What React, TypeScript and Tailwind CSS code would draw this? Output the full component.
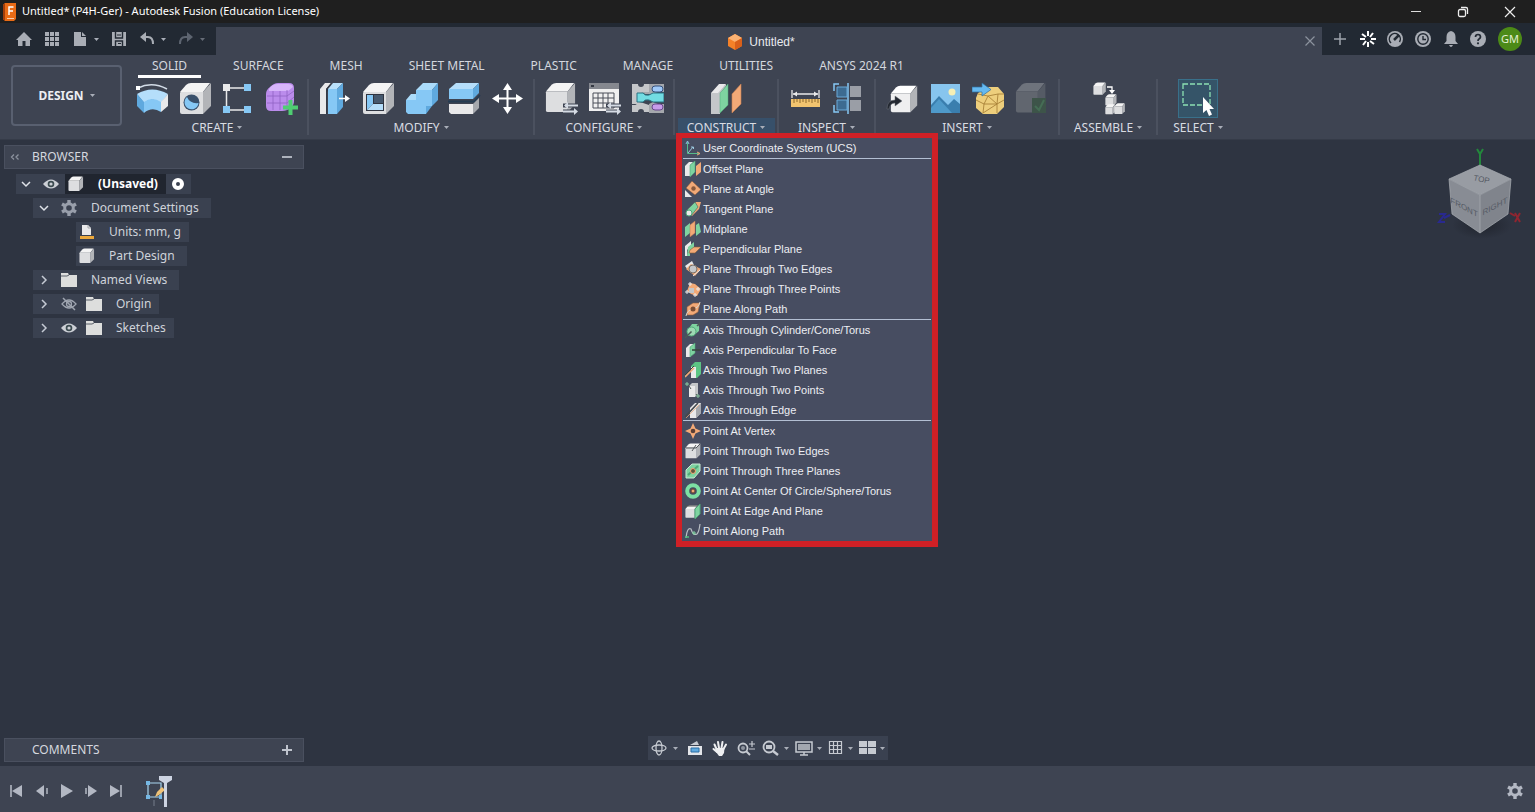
import React from "react";

type Kids = { children: React.ReactNode };

const W = "#e9e9ea";
const G = "#c4c6c9";
const D = "#a5a8ad";
const B = "#86c8f5";
const B2 = "#5fa9de";
const GR = "#7ed3a0";
const GR2 = "#4fa878";
const OR = "#f2a977";

function I33({ children }: Kids) {
  return (
    <svg viewBox="0 0 33 33" className="size-[33px] shrink-0" fill="none" aria-hidden="true">
      {children}
    </svg>
  );
}

function I16({ children }: Kids) {
  return (
    <svg viewBox="0 0 16 16" className="size-4 shrink-0" fill="none" aria-hidden="true">
      {children}
    </svg>
  );
}

function Solid({ x = 0, y = 0, s = 1, top = "#f4f4f4", front = "#dddee0", side = "#b2b4b8" }) {
  return (
    <g transform={`translate(${x} ${y}) scale(${s})`}>
      <path d="M1 10 L7 3 Q9 1 12 1 H31 L24 10Z" fill={top} />
      <path d="M24 10 L32 1 V24 L24 32Z" fill={side} />
      <path d="M1 11 Q1 10 2 10 H24 V32 H3 Q1 32 1 30Z" fill={front} />
    </g>
  );
}

function Arrows() {
  return (
    <g>
      <path d="M18 23.500H33M18 29.500H33" stroke="#3e4452" strokeWidth="4" />
      <path d="M20 23.500H33M18 29.500H30" stroke="#d5dbe4" strokeWidth="1.800" />
      <path d="M23 20 19 23.500 23 27ZM29 26 33 29.500 29 33Z" fill="#d5dbe4" />
    </g>
  );
}

const createIcons: [string, React.ReactNode][] = [
  ["Extrude sketch", <I33 key="a"><path d="M2 6Q16-1 31 7" stroke="#d3dce7" strokeWidth="1.500" /><rect x="0" y="4" width="4" height="4" fill="#fff" /><path d="M1 12Q16 3 32 12L25 21Q16 14 8 21Z" fill="#b5defa" /><path d="M1 12 8 20V31L1 24Z" fill={B2} /><path d="M8 20Q16 14 25 20V30Q16 24 8 31Z" fill={B} /><path d="M25 20 32 12V24L25 30Z" fill={W} /></I33>],
  ["Hole", <I33 key="a"><Solid /><circle cx="12.500" cy="20.500" r="8" fill="#39506b" /><path d="M8 15A7 7 0 1 0 19.500 21Q11 22 8 15Z" fill={B} /></I33>],
  ["Create sketch", <I33 key="a"><path d="M7 6H26M4.500 9V25M7 28H26" stroke={W} strokeWidth="1.500" /><rect x="1" y="2" width="7" height="7" fill={W} /><rect x="22" y="2" width="7" height="7" fill={B} /><rect x="1" y="24" width="7" height="7" fill={B} /><rect x="22" y="24" width="7" height="7" fill={B} /></I33>],
  ["Create form", <I33 key="a"><path d="M1 12Q1 8 5 5 9 1 13 1H24Q29 1 29 6V19Q29 24 25 26 22 29 17 29H6Q1 29 1 24Z" fill="#bb8cec" /><path d="M4 7Q7 2 13 2H23Q27 2 28 5L23 9H4Z" fill="#d7b5fa" /><path d="M2 14H22M2 21H22M8 9V28M15 9V28M22 8V28M22 14 29 9M22 21 29 15" stroke="#8f63c4" strokeWidth=".8" /><path d="M18 25.500H33M25.500 18V33" stroke="#4fce72" strokeWidth="4" /></I33>],
];

const modifyIcons: [string, React.ReactNode][] = [
  ["Press pull", <I33 key="a"><path d="M1 7 6 1H12L7 7V32H1Z" fill={W} /><path d="M7 7 12 1V5L8 10V32H7Z" fill="#353a45" /><path d="M9 7 14 1H24L18 7Z" fill="#b9e1fb" /><path d="M9 7H18V32H9Z" fill={B} /><path d="M18 7 24 1V25L18 32Z" fill={B2} /><path d="M20 16.500H28" stroke="#fff" strokeWidth="1.500" /><path d="M26 13 31 16.500 26 20Z" fill="#fff" /></I33>],
  ["Shell", <I33 key="a"><Solid /><path d="M4 12H22V29H4Z" fill="#303541" /><path d="M12 13H21V21H12Z" fill="#46596e" /><path d="M5 13H11V22L5 28Z" fill={B} /><path d="M5 28 11 22H21V28Z" fill="#b5defa" /></I33>],
  ["Combine", <I33 key="a"><path d="M11 8 18 1H33L27 8ZM1 18 6 12H11V18Z" fill="#abdcfb" /><path d="M11 8H27V24H21V32H3L1 30V18H11Z" fill={B} /><path d="M27 8 33 1V18L27 24ZM21 24H27L21 32Z" fill={B2} /></I33>],
  ["Split body", <I33 key="a"><path d="M1 7 8 1H31L25 7Z" fill="#b5defa" /><path d="M1 7H25V17H1Z" fill={B} /><path d="M25 7 31 1V11L25 17Z" fill={B2} /><path d="M0 19.500H26L32 13" stroke="#253c53" strokeWidth="1.800" /><path d="M1 22H25V32H3L1 30Z" fill={W} /><path d="M25 22 31 16V26L25 32Z" fill={D} /></I33>],
  ["Move", <I33 key="a"><path d="M16.500 5V28M5 16.500H28" stroke="#fff" strokeWidth="2" /><path d="M12 8 16.500 1 21 8ZM12 25 16.500 32 21 25ZM8 12 1 16.500 8 21ZM25 12 32 16.500 25 21Z" fill="#fff" /></I33>],
];

const configureIcons: [string, React.ReactNode][] = [
  ["Configure design", <I33 key="a"><Solid s={0.94} /><Arrows /></I33>],
  ["Configuration table", <I33 key="a"><path d="M1 1H31V29H1Z" fill="#f0f0f0" /><path d="M1 1H31V7H1Z" fill="#85888f" /><path d="M3 4H6" stroke="#343943" strokeWidth="2" /><path d="M5 11H26V26H5ZM5 16H26M5 21H26M10 11V26M15 11V26M20 11V26" stroke="#4b4f58" strokeWidth="1" /><Arrows /></I33>],
  ["Component group", <I33 key="a"><path d="M1 2H7Q7 5 10 5 13 5 13 2H18V10L12 11 8 13V20L12 21 18 23V30H13Q13 27 10 27 7 27 7 30H1V23H4Q6 23 6 20H1Z" fill={G} /><path d="M1 8H8V22H1Z" fill={G} /><path d="M18 2H33V10H27L22 12H14L10 10H18ZM18 22 22 20 27 22H33V31H18Z" fill={D} /><rect x="21" y="4" width="11" height="6" rx="3" fill="#9fc9f8" stroke="#35517d" /><path d="M6 11H12Q14 14 18 13L22 11H33V20H22L18 18Q14 17 12 20H6Z" fill="#72dce2" stroke="#2a7383" /><rect x="21" y="22" width="11" height="6" rx="3" fill="#c79cea" stroke="#68478c" /></I33>],
];

const constructIcons: [string, React.ReactNode][] = [
  ["Offset plane", <I33 key="a"><path d="M1 11 9 2H16L10 10V32H1Z" fill={W} /><path d="M1 11H8L16 2V4L10 12V32H1Z" fill={G} /><path d="M10 11 18 2V23L10 31Z" fill={GR} stroke={GR2} strokeWidth=".5" /><path d="M22 12 31 2V22L22 31Z" fill={OR} stroke="#ca8053" strokeWidth=".6" /></I33>],
];

const inspectIcons: [string, React.ReactNode][] = [
  ["Measure", <I33 key="a"><path d="M3 8V16M30 8V16M4 12H29" stroke={W} strokeWidth="1.300" /><path d="M4 12 8 9.500V14.500ZM29 12 25 9.500V14.500Z" fill={W} /><path d="M2 17H31V25H2Z" fill="#f2c46f" /><path d="M5 17V21M8 17V20M11 17V21M14 17V20M17 17V21M20 17V20M23 17V21M26 17V20M29 17V21" stroke="#8c692d" /></I33>],
  ["Interference", <I33 key="a"><path d="M7 2H2V9M2 23V30H7M16 1V32" stroke={B} strokeWidth="1.500" /><path d="M5 5H15V15H5ZM5 18H15V28H5Z" fill="#3d6b91" stroke="#6baad8" /><path d="M18 4H29V15H18ZM18 18H29V29H18Z" fill="#9a9ea6" /></I33>],
];

const insertIcons: [string, React.ReactNode][] = [
  ["Insert derive", <I33 key="a"><Solid x={4} y={3} s={0.85} top="#ffffff" front="#efeff0" /><path d="M1 27Q1 18 9 18V14L16 19 9 24V21Q4 21 3 27Z" fill="#232831" stroke="#6d727b" strokeWidth=".5" /></I33>],
  ["Canvas", <I33 key="a"><path d="M2 2H31V31H2Z" fill="#87c5ee" /><circle cx="23" cy="10" r="3.500" fill="#f7efb5" /><path d="M2 23 10 14 19 23 25 17 31 22V31H2Z" fill="#3a7eae" /><path d="M2 26 10 17 23 31H2Z" fill="#4f9aca" /></I33>],
  ["Insert mesh", <I33 key="a"><path d="M6 11 15 5H26L32 12V25L25 32H11L4 26V16Z" fill="#edce7c" /><path d="M6 12 16 14 26 12 32 12M16 14 12 22 4 18M12 22 25 22 26 12M12 22 11 31 25 22 32 18M25 22V31M16 14 25 22" stroke="#a98239" strokeWidth=".9" /><path d="M0 5H10V1L19 7.500 10 14V10H0Z" fill="#65b9f0" stroke="#2f6e9d" strokeWidth=".7" /></I33>],
  ["Manufacturer part", <I33 key="a"><Solid s={0.95} top="#6e737c" front="#61666f" side="#555b65" /><path d="M17 16H31V31H17Z" fill="#3d5449" /><path d="M20 24 24 28 29 18" stroke="#456d55" strokeWidth="2" /></I33>],
];

const assembleIcons: [string, React.ReactNode][] = [
  ["New component", <I33 key="a"><Solid x={1} s={0.4} y={0} /><Solid x={13} y={12} s={0.36} /><Solid x={13} y={22} s={0.32} /><Solid x={22} y={21} s={0.34} /><path d="M15 5H20V9" stroke="#fff" strokeWidth="1.300" /><path d="M17 8H23L20 12Z" fill="#fff" /></I33>],
];

const groups = [
  { name: "CREATE", icons: createIcons, cls: "w-[182px]" },
  { name: "MODIFY", icons: modifyIcons, cls: "w-[226px]" },
  { name: "CONFIGURE", icons: configureIcons, cls: "w-[140px]" },
  { name: "CONSTRUCT", icons: constructIcons, cls: "w-[104px]" },
  { name: "INSPECT", icons: inspectIcons, cls: "w-[97px]" },
  { name: "INSERT", icons: insertIcons, cls: "w-[184px]" },
  { name: "ASSEMBLE", icons: assembleIcons, cls: "w-[98px]" },
];

const tabs = ["SOLID", "SURFACE", "MESH", "SHEET METAL", "PLASTIC", "MANAGE", "UTILITIES", "ANSYS 2024 R1"];

const DK = "#4c5a55";
const face = <path d="M1 6 5 2H9L6 5V15H1Z" fill={W} />;

const menu: [string, React.ReactNode][][] = [
  [["User Coordinate System (UCS)", <I16 key="i"><path d="M2.500 2V13.500H14" stroke="#57b98a" /><path d="M1 4 2.500 1 4 4" stroke="#8cbde0" /><path d="M3 13 8 7M6 7H8.500V9" stroke="#9bc7de" /><path d="M12 12 15 13.500 12 15" stroke={OR} /></I16>]],
  [
    ["Offset Plane", <I16 key="i"><path d="M0 5 4 1H8L5 5V15H0Z" fill={W} /><path d="M5 4 10 0V11L5 16Z" fill={GR} stroke={GR2} strokeWidth=".6" /><path d="M11 5 16 1V11L11 15Z" fill={OR} /></I16>],
    ["Plane at Angle", <I16 key="i"><path d="M7 0 16 8.500 10 14 1 7Z" fill={OR} stroke="#7c533b" strokeWidth=".5" /><circle cx="8.500" cy="7.500" r="2.200" fill="#8a5a3d" /><path d="M0 9 7 16H0Z" fill={W} /></I16>],
    ["Tangent Plane", <I16 key="i"><path d="M3 8 11 1H16L14 8 7 15Z" fill={OR} /><path d="M2 9 10 1 13 6 6 15Z" fill={GR} stroke={DK} strokeWidth=".6" /><circle cx="4" cy="12" r="3" fill={W} stroke={GR2} /></I16>],
    ["Midplane", <I16 key="i"><path d="M0 6 5 2V12L0 16Z" fill={GR} /><path d="M5 4 10 0V12L5 16Z" fill={OR} stroke="#b87550" strokeWidth=".5" /><path d="M11 4 14 2 16 11 11 15Z" fill={GR} /></I16>],
    ["Perpendicular Plane", <I16 key="i"><path d="M0 5 6 0V5L2 9V15H0Z" fill={W} /><path d="M3 6 9 1V8L5 11V15H2Z" fill={GR} /><path d="M5 9 9 6H16L10 12H4Z" fill={OR} stroke="#875f35" strokeWidth=".6" /></I16>],
    ["Plane Through Two Edges", <I16 key="i"><path d="M0 5 7 0 9 4 3 9Z" fill={W} /><path d="M6 3 16 8 10 15 1 8Z" fill={OR} /><circle cx="8" cy="8" r="4" fill={G} stroke="#796d63" /><path d="M8 15 15 9" stroke={W} /></I16>],
    ["Plane Through Three Points", <I16 key="i"><path d="M2 10 5 2 10 3 16 8 12 15 6 13Z" fill={OR} /><path d="M4 7H9V12H4Z" fill={G} /><path d="M5 1V5M3 3H7M13 6V10M11 8H15M10 12V16M8 14H12M2 9V13M0 11H4" stroke={W} /></I16>],
    ["Plane Along Path", <I16 key="i"><path d="M2 6 8 2 15 2 13 11 8 14 2 14Z" fill={OR} stroke="#92603f" strokeWidth=".6" /><path d="M1 15Q2 9 8 8 14 7 15 1" stroke="#d8d7d1" /><circle cx="8" cy="8" r="2.500" fill="#7a4e35" /></I16>],
  ],
  [
    ["Axis Through Cylinder/Cone/Torus", <I16 key="i"><path d="M2 9 7 2H13Q15 5 14 9L8 14H3Z" fill={GR} /><ellipse cx="6.500" cy="9.500" rx="4.500" ry="4.500" fill="#9dd9b4" stroke={GR2} /><path d="M0 16 6.500 9.500M12 4 15 1" stroke={DK} strokeWidth="1.500" /></I16>],
    ["Axis Perpendicular To Face", <I16 key="i">{face}<path d="M5 5 10 1V11L5 15Z" fill={GR} stroke={GR2} strokeWidth=".6" /><path d="M7 8H16" stroke="#39463f" strokeWidth="1.600" /></I16>],
    ["Axis Through Two Planes", <I16 key="i"><path d="M6 4 10 0H16V12L12 16H6Z" fill="#5cc584" /><path d="M6 5H11V16H6Z" fill={W} /><path d="M0 15 9 6" stroke={OR} strokeWidth="1.600" /><path d="M0 13 9 4" stroke="#39463f" /></I16>],
    ["Axis Through Two Points", <I16 key="i"><path d="M4 4 7 1H13V12L10 15H4Z" fill={G} /><path d="M4 4H10V15H4Z" fill={W} /><path d="M2 1 6 7M11 12 13 15" stroke={DK} /><path d="M0 2H4M2 0V4M11 14H15M13 12V16" stroke="#8ac8a2" /></I16>],
    ["Axis Through Edge", <I16 key="i"><path d="M5 6 10 1H16V11L11 16H5Z" fill={W} /><path d="M11 6 16 1V11L11 16Z" fill={D} /><path d="M0 15 13 1" stroke="#45494d" strokeWidth="1.600" /><path d="M1 16 14 3" stroke={OR} strokeWidth=".7" /></I16>],
  ],
  [
    ["Point At Vertex", <I16 key="i"><path d="M8 0 10.500 5.500 16 8 10.500 10.500 8 16 5.500 10.500 0 8 5.500 5.500Z" fill={OR} /><circle cx="8" cy="8" r="2.300" fill="#5a3f36" /></I16>],
    ["Point Through Two Edges", <I16 key="i"><Solid s={0.48} /><path d="M1 5H11L15 1M11 2 7 8" stroke="#54585d" /></I16>],
    ["Point Through Three Planes", <I16 key="i"><path d="M1 7 7 1H15V8L9 15H1Z" fill={GR} stroke="#c7e9d3" /><path d="M3 12 13 3" stroke={GR2} strokeWidth="2" /><circle cx="8" cy="8" r="2.500" fill="#5f573f" stroke={OR} /></I16>],
    ["Point At Center Of Circle/Sphere/Torus", <I16 key="i"><circle cx="8" cy="8" r="5.800" stroke="#7ce0a3" strokeWidth="4" /><circle cx="8" cy="8" r="2" fill={OR} stroke="#64462f" /></I16>],
    ["Point At Edge And Plane", <I16 key="i"><Solid s={0.4} y={2} /><path d="M10 6 15 1V11L10 16Z" fill={GR} stroke={GR2} /><path d="M0 3H12" stroke="#4f5350" /></I16>],
    ["Point Along Path", <I16 key="i"><path d="M1 15Q2 4 6 6 8 13 12 11 14 9 15 1" stroke="#b9bec4" strokeWidth="1.200" /><path d="M0 14H4" stroke="#4fbe7b" strokeWidth="1.500" /><path d="M7 10H11M9 8V12" stroke={GR} /></I16>],
  ],
];

function Caret({ dim = false }: { dim?: boolean }) {
  return (
    <svg viewBox="0 0 5 3" className="h-[3px] w-[5px] shrink-0" aria-hidden="true">
      <path d="M0 0H5L2.500 3Z" fill={dim ? "#666c77" : "#a9aeb8"} />
    </svg>
  );
}

function ConstructMenu() {
  return (
    <div role="menu" className="absolute top-[54px] left-px z-20 w-[262px] border-[6px] border-t-[5px] border-[#cf2026] bg-[#474d61] font-['Liberation_Sans',sans-serif] text-[11px] text-[#eceef3]">
      {menu.map((section, i) => (
        <div key={i} role="group" className={i ? "mx-px border-t border-[#b3bfd3]" : "mx-px"}>
          {section.map(([label, icon]) => (
            <button key={label} role="menuitem" className="flex h-5 w-full items-center gap-0.5 px-0.5 whitespace-nowrap">
              {icon}
              {label}
            </button>
          ))}
        </div>
      ))}
    </div>
  );
}

function Ribbon() {
  return (
    <section className="flex h-[85px] shrink-0 border-b border-[#353b48] bg-[#3e4452]">
      <button className="mt-[10px] ml-[11px] flex h-[61px] w-[111px] items-center justify-center gap-1.5 rounded border-2 border-[#596070] text-[12px] font-bold text-[#eceef2]">
        DESIGN <Caret />
      </button>
      <div className="ml-[5px] flex-1">
        <nav className="ml-[11px] flex h-[23px] gap-[18px] text-[12px] whitespace-nowrap text-[#d4d7de]">
          {tabs.map((t, i) => (
            <a key={t} href="#" className={i === 0 ? "border-b-[3px] border-white px-[14px] pt-[3px] leading-4" : "px-[14px] pt-[3px] leading-4"}>
              {t}
            </a>
          ))}
        </nav>
        <div className="flex pt-px">
          {groups.map((g) => {
            const on = g.name === "CONSTRUCT";
            return (
              <div key={g.name} className={`relative flex h-14 flex-col items-center border-r-2 border-[#4b515f] ${g.cls}`}>
                <div className="flex h-[39px] gap-[10px] pt-[3px]">
                  {g.icons.map(([label, icon]) => (
                    <button key={label} aria-label={label} className="h-[33px]">{icon}</button>
                  ))}
                </div>
                <button className={`flex h-[17px] items-center justify-center gap-1 pt-0.5 text-[12px] text-[#d9dce2] ${on ? "w-[97px] bg-[#37506a]" : ""}`}>
                  {g.name}
                  <Caret />
                </button>
                {on && <ConstructMenu />}
              </div>
            );
          })}
          <div className="flex h-14 w-20 flex-col items-center">
            <button aria-label="Select tool" className="flex h-[39px] w-10 items-center justify-center border border-[#39708a] bg-[#355468]">
              <svg viewBox="0 0 36 36" className="size-9" fill="none" aria-hidden="true">
                <path d="M3 3H30V24H3Z" stroke="#8ce0b2" strokeWidth="1.300" strokeDasharray="5 2" />
                <path d="M23 16V32L26.500 29 29 35 32 33.500 29.500 28H34Z" fill="#fff" />
              </svg>
            </button>
            <button className="flex h-[17px] items-center gap-1 pt-0.5 text-[12px] text-[#d9dce2]">
              SELECT <Caret />
            </button>
          </div>
        </div>
      </div>
    </section>
  );
}

function Q({ label, children }: { label: string; children: React.ReactNode }) {
  return (
    <button aria-label={label} className="flex items-center gap-1.5">
      {children}
    </button>
  );
}

function TopBars() {
  return (
    <>
      <header className="flex h-[23px] shrink-0 items-center bg-[#1f1f1f] pl-[2px]">
        <svg viewBox="0 0 16 18" className="h-[18px] w-4" aria-hidden="true">
          <path d="M3 0H14V16L12 18H3L1 16V2Z" fill="#e96b16" />
          <path d="M1 2 3 0V18L1 16Z" fill="#a43e0a" />
          <path d="M7 12V4H11.500M7 8H11" stroke="#fff" strokeWidth="1.500" fill="none" />
          <path d="M5 15.500H12" stroke="#fbd0b0" />
        </svg>
        <h1 className="ml-1 flex-1 text-[11px] text-white">Untitled* (P4H-Ger) - Autodesk Fusion (Education License)</h1>
        <div className="flex items-center gap-[35px] pr-[19px]">
          <button aria-label="Minimize"><svg viewBox="0 0 12 12" className="size-3" aria-hidden="true"><path d="M1 5.500H11" stroke="#ddd" /></svg></button>
          <button aria-label="Restore"><svg viewBox="0 0 12 12" className="size-3" fill="none" aria-hidden="true"><rect x="1.500" y="3.500" width="7" height="7" rx="1.500" stroke="#eee" strokeWidth="1.300" /><path d="M4 1.500H9Q10.500 1.500 10.500 3V8" stroke="#eee" strokeWidth="1.300" /></svg></button>
          <button aria-label="Close"><svg viewBox="0 0 12 12" className="size-3" aria-hidden="true"><path d="M1 1 11 11M11 1 1 11" stroke="#eee" strokeWidth="1.200" /></svg></button>
        </div>
      </header>
      <div className="flex h-8 shrink-0 bg-[#222933] pt-1">
        <div className="flex w-[216px] shrink-0 items-center gap-3 pb-1 pl-4">
          <Q label="Home"><I16><path d="M8 1 0 9H2V15H6.500V10H9.500V15H14V9H16Z" fill="#a9adb5" /></I16></Q>
          <Q label="Data panel"><I16><path d="M1 1H5V5H1ZM6 1H10V5H6ZM11 1H15V5H11ZM1 6H5V10H1ZM6 6H10V10H6ZM11 6H15V10H11ZM1 11H5V15H1ZM6 11H10V15H6ZM11 11H15V15H11Z" fill="#a9adb5" /></I16></Q>
          <Q label="File"><I16><path d="M2 1H9V6H14V15H2ZM10 1 14 5H10Z" fill="#a9adb5" /></I16><Caret /></Q>
          <Q label="Save"><I16><path d="M1 1H15V15H1Z" fill="#a9adb5" /><path d="M4.500 1V7H11.500V1M4.500 15V10H11.500V15" stroke="#222933" strokeWidth="1.400" /><path d="M6 4H10M7 12.500H10" stroke="#222933" strokeWidth="1" /></I16></Q>
          <Q label="Undo"><I16><path d="M3 6H9Q14 6 14 13" stroke="#a9adb5" strokeWidth="2" /><path d="M1 6 7 1V11Z" fill="#a9adb5" /></I16><Caret /></Q>
          <Q label="Redo"><I16><path d="M13 6H7Q2 6 2 13" stroke="#5d6470" strokeWidth="2" /><path d="M15 6 9 1V11Z" fill="#5d6470" /></I16><Caret dim /></Q>
        </div>
        <div className="relative flex flex-1 items-center justify-center gap-1.5 bg-[#3e4452] pt-0.5 pr-4 text-[#e8eaee]">
          <svg viewBox="0 0 16 16" className="size-4" aria-hidden="true"><path d="M8 0 15 4V12L8 16 1 12V4Z" fill="#f48128" /><path d="M8 0 15 4 8 8 1 4Z" fill="#fbb273" /><path d="M8 8 15 4V12L8 16Z" fill="#d9601a" /></svg>
          <span className="font-['Liberation_Sans',sans-serif] text-[12px]">Untitled*</span>
          <button aria-label="Close tab" className="absolute top-2 right-1.5"><svg viewBox="0 0 12 12" className="size-3" aria-hidden="true"><path d="M1.500 1.500 10.500 10.500M10.500 1.500 1.500 10.500" stroke="#8c929e" strokeWidth="1.200" /></svg></button>
        </div>
        <div className="flex w-[213px] shrink-0 items-center justify-between pr-[13px] pb-1 pl-[10px]">
          <Q label="New tab"><I16><path d="M8 2V14M2 8H14" stroke="#9da2ac" strokeWidth="1.500" /></I16></Q>
          <Q label="Extensions"><I16><path d="M8 0V5M13 2 10 6M16 8H11M14 13 10 10M8 16V11M3 14 6 10M0 8H5M2 3 6 6" stroke="#fff" strokeWidth="2" /></I16></Q>
          <Q label="Performance"><I16><circle cx="8" cy="8" r="8" fill="#a9adb5" /><path d="M4 12A5.500 5.500 0 1 1 12.500 11" stroke="#222933" strokeWidth="1.500" /><path d="M7 9 12 4" stroke="#222933" strokeWidth="2.500" /></I16></Q>
          <Q label="Job status"><I16><circle cx="8" cy="8" r="8" fill="#a9adb5" /><circle cx="8" cy="8" r="5.200" stroke="#222933" strokeWidth="1.400" /><path d="M8 5V8.500H11" stroke="#222933" strokeWidth="1.400" /></I16></Q>
          <Q label="Notifications"><I16><path d="M8 0Q12.500 1 12.500 6V10L15 13H1L3.500 10V6Q3.500 1 8 0ZM6 14H10Q9 16 8 16 7 16 6 14Z" fill="#a9adb5" /></I16></Q>
          <Q label="Help"><I16><circle cx="8" cy="8" r="8" fill="#a9adb5" /><path d="M5.500 6Q5.500 3.500 8 3.500 10.500 3.500 10.500 6 10.500 7 9 8 8 8.500 8 10" stroke="#222933" strokeWidth="1.700" /><circle cx="8" cy="12.300" r="1.100" fill="#222933" /></I16></Q>
          <button className="flex size-6 items-center justify-center rounded-full bg-[#4c8a17] text-[11px] text-[#e4f0d4]">GM</button>
        </div>
      </div>
    </>
  );
}

function Chevron({ open }: { open: boolean }) {
  return <I16>{open ? <path d="M4 6 8 10 12 6" stroke="#dfe2e8" strokeWidth="1.500" /> : <path d="M6 4 10 8 6 12" stroke="#c5cad4" strokeWidth="1.500" />}</I16>;
}
const Eye = () => <I16><path d="M0 8Q8-1 16 8 8 17 0 8Z" fill="#cdd0d6" /><circle cx="8" cy="8" r="3.300" fill="#3c4b50" /><circle cx="8" cy="8" r="1.600" fill="#cdd0d6" /></I16>;
const EyeOff = () => <I16><path d="M1 8Q8 0 15 8 8 16 1 8Z" stroke="#9fa5b0" strokeWidth="1.300" /><circle cx="8" cy="8" r="2.500" stroke="#9fa5b0" strokeWidth="1.300" /><path d="M2 2 14 14" stroke="#9fa5b0" strokeWidth="1.500" /></I16>;
const Folder = () => <svg viewBox="0 0 18 16" className="h-4 w-[18px] shrink-0" aria-hidden="true"><path d="M1 1H8L9 3H17V15H1Z" fill="#dddedd" /><path d="M1 4H7L9 3" stroke="#5b606b" strokeWidth="1" fill="none" /></svg>;
const Gear = ({ c }: { c: string }) => <I16><circle cx="8" cy="8" r="4.300" stroke={c} strokeWidth="3" /><path d="M8 0V3M8 13V16M1 4 3.700 5.500M12.300 10.500 15 12M15 4 12.300 5.500M3.700 10.500 1 12" stroke={c} strokeWidth="3.400" /></I16>;
const Part = () => <I16><Solid s={0.47} /></I16>;

function Row({ cls, children }: { cls: string; children: React.ReactNode }) {
  return <li className={`flex h-5 w-max items-center bg-[#3a4150] ${cls}`}>{children}</li>;
}

function Browser() {
  return (
    <aside className="w-[300px]">
      <div className="flex h-6 items-center border border-[#4a505f] bg-[#3e4452] text-[12px] text-[#d5d8df]">
        <button aria-label="Collapse" className="ml-[5px] w-[22px]"><svg viewBox="0 0 10 8" className="h-2 w-2.5" fill="none" aria-hidden="true"><path d="M4 1.500 1.500 4 4 6.500M8.500 1.500 6 4 8.500 6.500" stroke="#8b919d" strokeWidth="1.300" /></svg></button>
        <h2 className="flex-1">BROWSER</h2>
        <button aria-label="Hide" className="mr-[11px]"><svg viewBox="0 0 10 10" className="size-2.5" aria-hidden="true"><path d="M0 5H10" stroke="#aeb3bd" strokeWidth="2" /></svg></button>
      </div>
      <ul className="mt-[5px] flex flex-col gap-1 text-[12px] text-[#cfd3da]">
        <Row cls="ml-3">
          <span className="ml-0.5"><Chevron open /></span>
          <span className="ml-[9px]"><Eye /></span>
          <span className="ml-1.5 flex h-5 items-center gap-[14px] bg-[#20252f] pr-2 pl-[3px] font-bold text-white"><Part />(Unsaved)</span>
          <span className="mr-[7px] ml-1.5 size-3 rounded-full border-4 border-white" />
        </Row>
        <Row cls="ml-[29px] pr-3"><span className="ml-[3px]"><Chevron open /></span><span className="mr-[14px] ml-[9px]"><Gear c="#999fab" /></span>Document Settings</Row>
        <Row cls="ml-[72px] pr-2"><span className="mr-[14px] ml-[3px]"><I16><path d="M3 1H9L12 4V11H3Z" fill={W} /><path d="M9 1V4H12" stroke={D} /><path d="M1 12H15V15H1Z" fill="#eba83c" /></I16></span>Units: mm, g</Row>
        <Row cls="ml-[72px] pr-3"><span className="mr-[14px] ml-[3px]"><Part /></span>Part Design</Row>
        <Row cls="ml-[29px] pr-3"><span className="ml-[3px]"><Chevron open={false} /></span><span className="mr-[13px] ml-2"><Folder /></span>Named Views</Row>
        <Row cls="ml-[29px] pr-2"><span className="ml-[3px]"><Chevron open={false} /></span><span className="ml-[9px]"><EyeOff /></span><span className="mr-[13px] ml-2"><Folder /></span>Origin</Row>
        <Row cls="ml-[29px] pr-2"><span className="ml-[3px]"><Chevron open={false} /></span><span className="ml-[9px]"><Eye /></span><span className="mr-[13px] ml-2"><Folder /></span>Sketches</Row>
      </ul>
    </aside>
  );
}

function ViewCube() {
  return (
    <svg viewBox="0 0 90 100" className="h-[100px] w-[90px]" role="img" aria-label="View cube">
      <defs>
        <radialGradient id="cubeShade"><stop offset="0" stopColor="#20242d" /><stop offset="1" stopColor="#2e3441" /></radialGradient>
      </defs>
      <ellipse cx="46" cy="78" rx="30" ry="14" fill="url(#cubeShade)" />
      <path d="M44 22V7M41 2 44 7 47 2" stroke="#23883c" strokeWidth="2" fill="none" />
      <path d="M14 68 8 71M3 67H9L3 75H9" stroke="#29298f" strokeWidth="2" fill="none" />
      <path d="M74 66 79 69M79 66 84 75M84 66 79 75" stroke="#8f2530" strokeWidth="2" fill="none" />
      <path d="M44 18 75 32 44 48 13 32Z" fill="#989ca3" />
      <path d="M13 32 44 48V86L16 67Z" fill="#888c94" />
      <path d="M44 48 75 32 72 67 44 86Z" fill="#80848c" />
      <path d="M13 32 44 48 75 32M44 48V86M44 18 75 32 72 67 44 86 16 67 13 32Z" stroke="#a9adb3" strokeWidth=".7" fill="none" />
      <g fill="#555a64" fontFamily="Liberation Sans, sans-serif" fontSize="8" textAnchor="middle">
        <text transform="translate(45 35) rotate(12)">TOP</text>
        <text transform="translate(28 63) skewY(28)">FRONT</text>
        <text transform="translate(59 62) skewY(-28)">RIGHT</text>
      </g>
    </svg>
  );
}

function NavBar() {
  const c = "#c6cad1";
  return (
    <div className="flex h-6 w-[240px] items-center justify-between bg-[#3a4150] px-[3px]">
      <div className="flex items-center gap-[9px]">
        <Q label="Orbit"><I16><ellipse cx="8" cy="8" rx="7" ry="3" stroke={c} strokeWidth="1.300" /><ellipse cx="8" cy="8" rx="3" ry="7" stroke={c} strokeWidth="1.300" /></I16><Caret /></Q>
        <Q label="Look at"><I16><path d="M1 6H15V15H1Z" fill="#e3e5e9" /><path d="M3 5 10 1 12 5Z" fill={c} /><path d="M4 8H12V12H4Z" fill="#5fa9de" stroke="#2a6da4" /></I16></Q>
        <Q label="Pan"><I16><path d="M4.500 9 2.500 4.500M7 8 6 2M9.500 8 10.500 2M11.500 9 14 4.500M5 12 1.500 9" stroke="#eeeff1" strokeWidth="2" strokeLinecap="round" /><path d="M4 8H12.500L12 13 10 16H7L4 12Z" fill="#eeeff1" /></I16></Q>
        <Q label="Zoom"><svg viewBox="0 0 18 16" className="h-4 w-[18px]" fill="none" aria-hidden="true"><circle cx="6" cy="8" r="4.500" stroke={c} strokeWidth="1.800" /><circle cx="6" cy="8" r="2" fill="#8e949f" /><path d="M9 11 13 15" stroke={c} strokeWidth="2" /><path d="M15 1V7M12 4H18M12 9H18" stroke={c} strokeWidth="1.200" /></svg></Q>
      </div>
      <div className="flex items-center gap-1.5">
        <span className="flex items-center gap-1"><Q label="Fit"><svg viewBox="0 0 18 16" className="h-4 w-[18px]" fill="none" aria-hidden="true"><circle cx="7" cy="7" r="5.500" stroke={c} strokeWidth="1.800" /><rect x="4" y="5" width="6" height="4" fill={c} /><path d="M11 11 16 15" stroke={c} strokeWidth="2.500" /></svg></Q><Caret /></span>
        <span className="flex items-center gap-1"><Q label="Display settings"><svg viewBox="0 0 18 16" className="h-4 w-[18px]" fill="none" aria-hidden="true"><path d="M1 2H17V12H1ZM9 12V15M5 15H13" stroke={c} strokeWidth="1.500" /><path d="M3 4H15V10H3Z" fill="#a2a7af" /></svg></Q><Caret /></span>
        <span className="flex items-center gap-1"><Q label="Grid and snaps"><I16><path d="M1.500 1.500H13.500V13.500H1.500ZM5.500 1V14M9.500 1V14M1 5.500H14M1 9.500H14" stroke={c} strokeWidth="1.200" /></I16></Q><Caret /></span>
        <span className="flex items-center gap-1"><Q label="Viewports"><svg viewBox="0 0 17 14" className="h-[14px] w-[17px]" aria-hidden="true"><path d="M0 0H8V6H0ZM9 0H17V6H9ZM0 7H8V13H0ZM9 7H17V13H9Z" fill={c} /></svg></Q><Caret /></span>
      </div>
    </div>
  );
}

function Timeline() {
  const c = "#b3b8c3";
  return (
    <footer className="flex h-[46px] shrink-0 items-center bg-[#3e4452] pt-1 pr-3 pl-2">
      <div className="flex items-center gap-[9px]">
        <Q label="To start"><I16><path d="M3 2V14" stroke={c} strokeWidth="1.600" /><path d="M14 2V14L4 8Z" fill={c} /></I16></Q>
        <Q label="Step back"><I16><path d="M11 2V14L3 8Z" fill={c} /><path d="M14 5V11" stroke={c} strokeWidth="1.500" /></I16></Q>
        <Q label="Play"><I16><path d="M3 1 15 8 3 15Z" fill={c} /></I16></Q>
        <Q label="Step forward"><I16><path d="M5 2V14L14 8Z" fill={c} /><path d="M3 5V11" stroke={c} strokeWidth="1.500" /></I16></Q>
        <Q label="To end"><I16><path d="M13 2V14" stroke={c} strokeWidth="1.600" /><path d="M2 2V14L12 8Z" fill={c} /></I16></Q>
      </div>
      <button aria-label="Sketch feature" className="ml-[21px]">
        <svg viewBox="0 0 28 34" className="h-[34px] w-7" fill="none" aria-hidden="true">
          <path d="M3 9H16V23H3Z" stroke="#a9d5ef" strokeWidth="1.200" />
          <path d="M1 7H5V11H1ZM1 21H5V25H1ZM14 21H17V25H14Z" fill="#75b7e3" />
          <path d="M9 26V32" stroke="#59606e" strokeWidth="2" />
          <path d="M10 23 12 18 17 13 20 16 14 21Z" fill="#efc277" />
          <path d="M14 2H27V6L22 9V33H19V9L14 6Z" fill="#cdd4e2" />
        </svg>
      </button>
      <span className="flex-1" />
      <Q label="Settings"><Gear c={c} /></Q>
    </footer>
  );
}

export default function App() {
  return (
    <div className="flex min-h-screen flex-col bg-[#2e3441] font-['Noto_Sans',sans-serif]">
      <TopBars />
      <Ribbon />
      <main className="flex flex-1 flex-col justify-between px-1 pt-[5px] pb-1">
        <div className="flex items-start justify-between">
          <Browser />
          <div className="pt-0.5 pr-[5px]"><ViewCube /></div>
        </div>
        <div className="grid grid-cols-[300px_1fr_300px] items-end">
          <div className="flex h-6 items-center border border-[#4a505f] bg-[#3e4452] pl-[27px] text-[12px] text-[#d5d8df]">
            <h2 className="flex-1">COMMENTS</h2>
            <button aria-label="Add comment" className="mr-[11px]"><svg viewBox="0 0 10 10" className="size-2.5" aria-hidden="true"><path d="M0 5H10M5 0V10" stroke="#bfc4cd" strokeWidth="2" /></svg></button>
          </div>
          <div className="flex justify-center pb-0.5"><NavBar /></div>
        </div>
      </main>
      <Timeline />
    </div>
  );
}
